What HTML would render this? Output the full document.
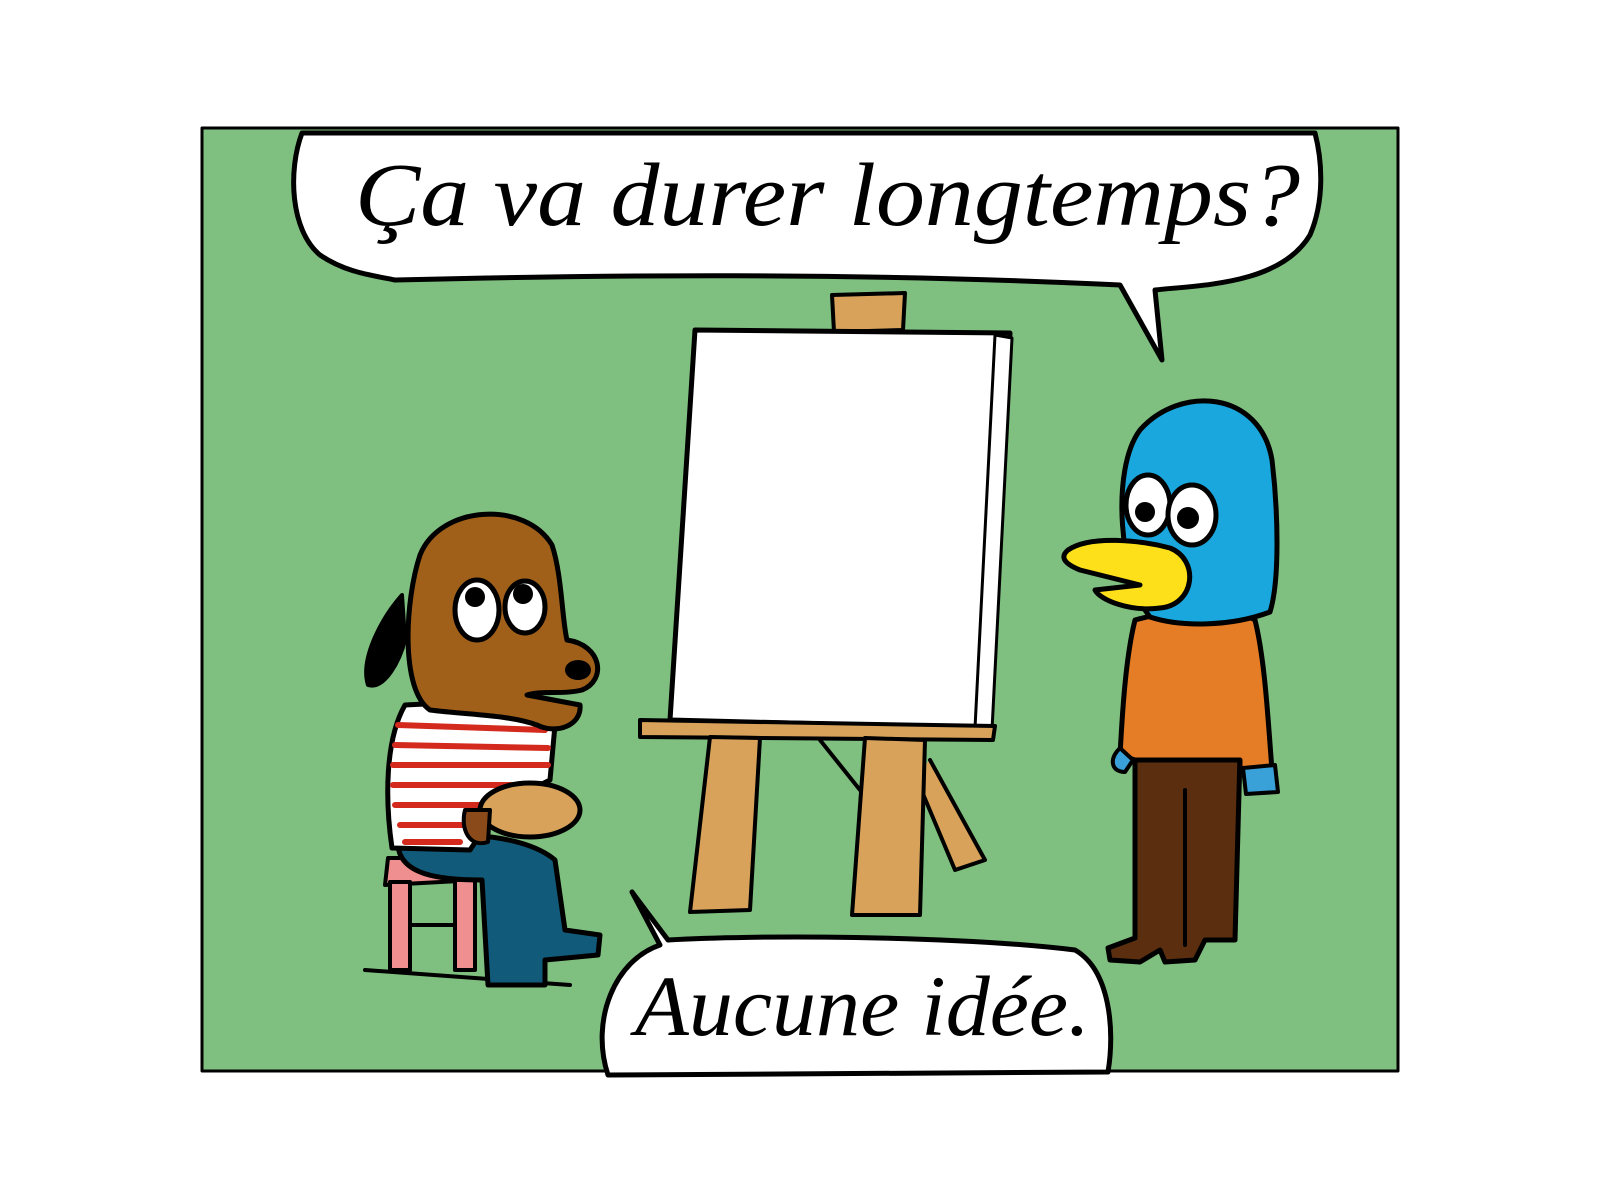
<!DOCTYPE html>
<html><head><meta charset="utf-8"><style>
html,body{margin:0;padding:0;background:#fff;width:1600px;height:1199px;overflow:hidden}
svg{display:block}
</style></head><body>
<svg width="1600" height="1199" viewBox="0 0 1600 1199" xmlns="http://www.w3.org/2000/svg" stroke-linejoin="round" stroke-linecap="round">
<rect x="202" y="128" width="1196" height="943" fill="#7fbf7f" stroke="#000" stroke-width="3"/>
<!-- top bubble -->
<path d="M302 133 C288 170 290 230 320 255 C345 272 370 275 395 280 C600 275 850 272 1120 285 L1162 360 L1155 290 C1200 285 1280 285 1310 235 C1325 200 1322 160 1315 133 Z" fill="#fff" stroke="#000" stroke-width="5"/>
<text x="355" y="225" font-family="Liberation Serif, serif" font-style="italic" font-size="90" fill="#000" textLength="945" lengthAdjust="spacingAndGlyphs">Ça va durer longtemps?</text>
<!-- easel back -->
<path d="M832 295 L905 293 L903 330 L834 332 Z" fill="#d8a25a" stroke="#000" stroke-width="4"/>
<path d="M820 740 L860 790 M930 760 L985 860 L955 870 L915 775" fill="#d8a25a" stroke="#000" stroke-width="4"/>
<!-- canvas -->
<path d="M695 330 L1010 333 L990 728 L670 720 Z" fill="#fff" stroke="#000" stroke-width="5"/>
<path d="M995 335 L1012 338 L992 730 L975 728 Z" fill="#fff" stroke="#000" stroke-width="3"/>
<!-- easel ledge and legs -->
<path d="M640 720 L995 726 L993 740 L640 737 Z" fill="#d8a25a" stroke="#000" stroke-width="4"/>
<path d="M710 737 L760 738 L750 910 L690 912 Z" fill="#d8a25a" stroke="#000" stroke-width="4"/>
<path d="M865 738 L925 740 L920 915 L852 915 Z" fill="#d8a25a" stroke="#000" stroke-width="4"/>
<!-- stool -->
<path d="M388 858 L472 858 L478 880 L385 885 Z" fill="#ef8f8f" stroke="#000" stroke-width="4"/>
<path d="M390 882 L410 882 L410 970 L390 970 Z M455 880 L475 880 L475 970 L455 970 Z" fill="#ef8f8f" stroke="#000" stroke-width="4"/>
<line x1="410" y1="925" x2="455" y2="925" stroke="#000" stroke-width="4"/>
<line x1="365" y1="970" x2="570" y2="985" stroke="#000" stroke-width="4"/>
<!-- dog legs -->
<path d="M398 845 C430 830 520 830 555 860 L565 930 L600 935 L598 955 L545 960 L545 985 L488 985 L482 880 C440 880 400 875 398 845 Z" fill="#125a7a" stroke="#000" stroke-width="5"/>
<!-- shirt -->
<path d="M405 705 C385 740 385 800 392 848 L470 850 L500 805 L550 780 L555 725 L505 700 Z" fill="#fff" stroke="#000" stroke-width="5"/>
<g stroke="#d42a1e" stroke-width="6" fill="none">
<path d="M398 725 L545 730 M395 745 L548 748 M393 765 L548 765 M393 785 L530 785 M395 805 L490 805 M400 825 L470 825 M405 842 L460 842"/>
</g>
<!-- palette -->
<ellipse cx="530" cy="810" rx="50" ry="27" fill="#d8a25a" stroke="#000" stroke-width="5"/>
<path d="M465 810 C460 830 470 848 488 842 L490 810 Z" fill="#8a4a1a" stroke="#000" stroke-width="4"/>
<!-- dog head -->
<path d="M420 555 C440 505 525 500 552 545 C562 575 562 620 567 640 C602 645 607 680 582 690 C562 695 542 690 527 695 L580 705 C582 725 557 735 537 725 C510 715 470 715 430 710 C400 690 405 600 420 555 Z" fill="#a0601a" stroke="#000" stroke-width="5"/>
<path d="M402 595 C380 620 360 660 368 685 C385 690 400 660 405 640 Z" fill="#000" stroke="#000" stroke-width="4"/>
<ellipse cx="477" cy="610" rx="22" ry="30" fill="#fff" stroke="#000" stroke-width="5"/>
<ellipse cx="525" cy="607" rx="20" ry="26" fill="#fff" stroke="#000" stroke-width="5"/>
<circle cx="475" cy="597" r="10" fill="#000"/><circle cx="523" cy="594" r="10" fill="#000"/>
<ellipse cx="578" cy="670" rx="13" ry="10" fill="#000"/>
<!-- bird pants -->
<path d="M1135 755 L1240 755 L1235 940 L1205 940 L1195 960 L1165 962 L1160 950 L1140 962 L1110 960 L1108 948 L1135 938 Z" fill="#5a2e0e" stroke="#000" stroke-width="5"/>
<line x1="1185" y1="790" x2="1185" y2="945" stroke="#000" stroke-width="4"/>
<!-- bird torso -->
<path d="M1135 620 C1170 610 1230 605 1255 620 C1265 660 1268 720 1272 770 L1240 772 L1240 760 L1135 760 L1120 755 C1122 720 1125 660 1135 620 Z" fill="#e57c26" stroke="#000" stroke-width="5"/>
<path d="M1120 748 C1108 760 1112 772 1125 772 L1133 760 Z M1243 768 L1275 765 L1278 792 L1246 794 Z" fill="#3aa0d8" stroke="#000" stroke-width="4"/>
<path d="M1140 430 C1180 385 1260 390 1272 460 C1278 510 1280 580 1270 612 C1230 627 1180 627 1150 617 C1120 580 1110 470 1140 430 Z" fill="#1aa7dd" stroke="#000" stroke-width="5"/>
<ellipse cx="1148" cy="505" rx="22" ry="30" fill="#fff" stroke="#000" stroke-width="5"/>
<ellipse cx="1192" cy="515" rx="24" ry="30" fill="#fff" stroke="#000" stroke-width="5"/>
<circle cx="1145" cy="512" r="10" fill="#000"/><circle cx="1188" cy="518" r="11" fill="#000"/>
<path d="M1068 550 C1090 535 1140 540 1170 548 C1200 560 1195 605 1160 608 C1130 612 1100 600 1095 590 L1140 585 L1080 570 C1060 562 1062 555 1068 550 Z" fill="#fde01a" stroke="#000" stroke-width="5"/>
<!-- bottom bubble -->
<path d="M632 892 L668 940 C750 935 950 935 1075 950 C1110 970 1115 1030 1108 1072 L608 1075 C590 1020 615 960 660 945 Z" fill="#fff" stroke="#000" stroke-width="5"/>
<text x="635" y="1035" font-family="Liberation Serif, serif" font-style="italic" font-size="86" fill="#000" textLength="455" lengthAdjust="spacingAndGlyphs">Aucune idée.</text>
</svg>
</body></html>
